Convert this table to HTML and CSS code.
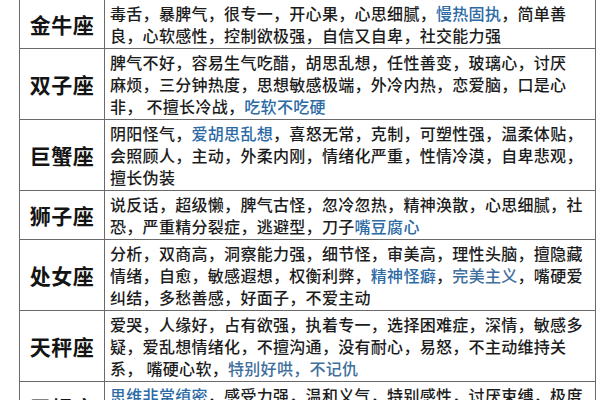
FILE: index.html
```html
<!DOCTYPE html>
<html lang="zh">
<head>
<meta charset="utf-8">
<link rel="stylesheet" href="styles.css">
</head>
<body>
<table class="zodiac">
  <tr>
    <th>金牛座</th>
    <td>毒舌，暴脾气，很专一，开心果，心思细腻，<span class="hl">慢热固执</span>，简单善<br>良，心软感性，控制欲极强，自信又自卑，社交能力强</td>
  </tr>
  <tr>
    <th>双子座</th>
    <td>脾气不好，容易生气吃醋，胡思乱想，任性善变，玻璃心，讨厌<br>麻烦，三分钟热度，思想敏感极端，外冷内热，恋爱脑，口是心<br>非， 不擅长冷战，<span class="hl">吃软不吃硬</span></td>
  </tr>
  <tr>
    <th>巨蟹座</th>
    <td>阴阳怪气，<span class="hl">爱胡思乱想</span>，喜怒无常，克制，可塑性强，温柔体贴，<br>会照顾人，主动，外柔内刚，情绪化严重，性情冷漠，自卑悲观，<br>擅长伪装</td>
  </tr>
  <tr>
    <th>狮子座</th>
    <td>说反话，超级懒，脾气古怪，忽冷忽热，精神涣散，心思细腻，社<br>恐，严重精分裂症，逃避型，刀子<span class="hl">嘴豆腐心</span></td>
  </tr>
  <tr>
    <th>处女座</th>
    <td>分析，双商高，洞察能力强，细节怪，审美高，理性头脑，擅隐藏<br>情绪，自愈，敏感遐想，权衡利弊，<span class="hl">精神怪癖</span>，<span class="hl soft">完美主义</span>，嘴硬爱<br>纠结，多愁善感，好面子，不爱主动</td>
  </tr>
  <tr>
    <th>天秤座</th>
    <td>爱哭，人缘好，占有欲强，执着专一，选择困难症，深情，敏感多<br>疑，爱乱想情绪化，不擅沟通，没有耐心，易怒，不主动维持关<br>系， 嘴硬心软，<span class="hl soft">特别好哄，不记仇</span></td>
  </tr>
  <tr class="last">
    <th>天蝎座</th>
    <td><span class="hl">思维非常缜密</span>，感受力强，温和义气，特别感性，讨厌束缚，极度</td>
  </tr>
</table>
</body>
</html>
```

FILE: styles.css
```css
html, body {
  margin: 0;
  padding: 0;
  background: #ffffff;
  width: 600px;
  height: 400px;
  overflow: hidden;
}

.zodiac {
  margin: -1px 0 0 19px;
  width: 577px;
  border-collapse: collapse;
  font-family: "Noto Sans CJK SC", "Noto Sans", sans-serif;
  color: #1c1c1c;
}

.zodiac th,
.zodiac td {
  border: 1.5px solid #6a6a6a;
  vertical-align: middle;
}

.zodiac th {
  width: 84px;
  font-size: 21px;
  font-weight: 700;
  text-align: center;
  padding: 0;
  color: #141414;
  letter-spacing: 0.5px;
}

.zodiac td {
  font-size: 16px;
  font-weight: 500;
  letter-spacing: 0.3px;
  line-height: 22px;
  padding: 2px 4px 2px 5px;
  white-space: nowrap;
  text-align: left;
}

.zodiac .last td {
  vertical-align: top;
}

.zodiac .last th,
.zodiac .last td {
  height: 46px;
}

.hl {
  color: #2c6aa6;
}

.hl.soft {
  color: #3f6f9c;
}
```
